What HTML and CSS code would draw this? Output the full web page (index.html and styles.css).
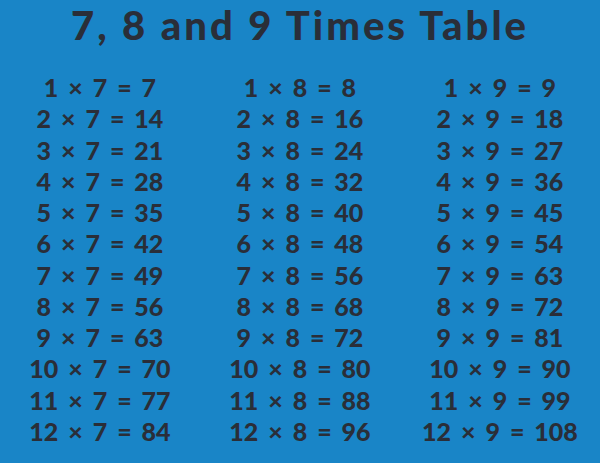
FILE: index.html
```html
<!DOCTYPE html>
<html>
<head>
<meta charset="utf-8">
<link rel="stylesheet" href="styles.css">
</head>
<body>
<div class="page">
  <h1 class="title">7, 8 and 9 Times Table</h1>
  <div class="tables">
    <div class="col">
      <div class="row">1 × 7 = 7</div>
      <div class="row">2 × 7 = 14</div>
      <div class="row">3 × 7 = 21</div>
      <div class="row">4 × 7 = 28</div>
      <div class="row">5 × 7 = 35</div>
      <div class="row">6 × 7 = 42</div>
      <div class="row">7 × 7 = 49</div>
      <div class="row">8 × 7 = 56</div>
      <div class="row">9 × 7 = 63</div>
      <div class="row">10 × 7 = 70</div>
      <div class="row">11 × 7 = 77</div>
      <div class="row">12 × 7 = 84</div>
    </div>
    <div class="col">
      <div class="row">1 × 8 = 8</div>
      <div class="row">2 × 8 = 16</div>
      <div class="row">3 × 8 = 24</div>
      <div class="row">4 × 8 = 32</div>
      <div class="row">5 × 8 = 40</div>
      <div class="row">6 × 8 = 48</div>
      <div class="row">7 × 8 = 56</div>
      <div class="row">8 × 8 = 68</div>
      <div class="row">9 × 8 = 72</div>
      <div class="row">10 × 8 = 80</div>
      <div class="row">11 × 8 = 88</div>
      <div class="row">12 × 8 = 96</div>
    </div>
    <div class="col">
      <div class="row">1 × 9 = 9</div>
      <div class="row">2 × 9 = 18</div>
      <div class="row">3 × 9 = 27</div>
      <div class="row">4 × 9 = 36</div>
      <div class="row">5 × 9 = 45</div>
      <div class="row">6 × 9 = 54</div>
      <div class="row">7 × 9 = 63</div>
      <div class="row">8 × 9 = 72</div>
      <div class="row">9 × 9 = 81</div>
      <div class="row">10 × 9 = 90</div>
      <div class="row">11 × 9 = 99</div>
      <div class="row">12 × 9 = 108</div>
    </div>
  </div>
</div>
</body>
</html>
```

FILE: styles.css
```css
html, body {
  margin: 0;
  padding: 0;
}
body {
  background: #1985c7;
  width: 600px;
  height: 463px;
  overflow: hidden;
}
.page {
  font-family: "Lato", "Open Sans", sans-serif;
  color: #2a2e38;
}
.title {
  margin: 0;
  padding-top: 3px;
  height: 69px;
  font-size: 40px;
  line-height: 44px;
  font-weight: 900;
  text-align: center;
  letter-spacing: 3px;
}
.tables {
  display: grid;
  grid-template-columns: repeat(3, 1fr);
}
.col {
  display: flex;
  flex-direction: column;
  align-items: center;
}
.row {
  height: 31.25px;
  line-height: 31.25px;
  font-size: 25px;
  font-weight: 900;
  word-spacing: 4px;
  white-space: nowrap;
}
```
